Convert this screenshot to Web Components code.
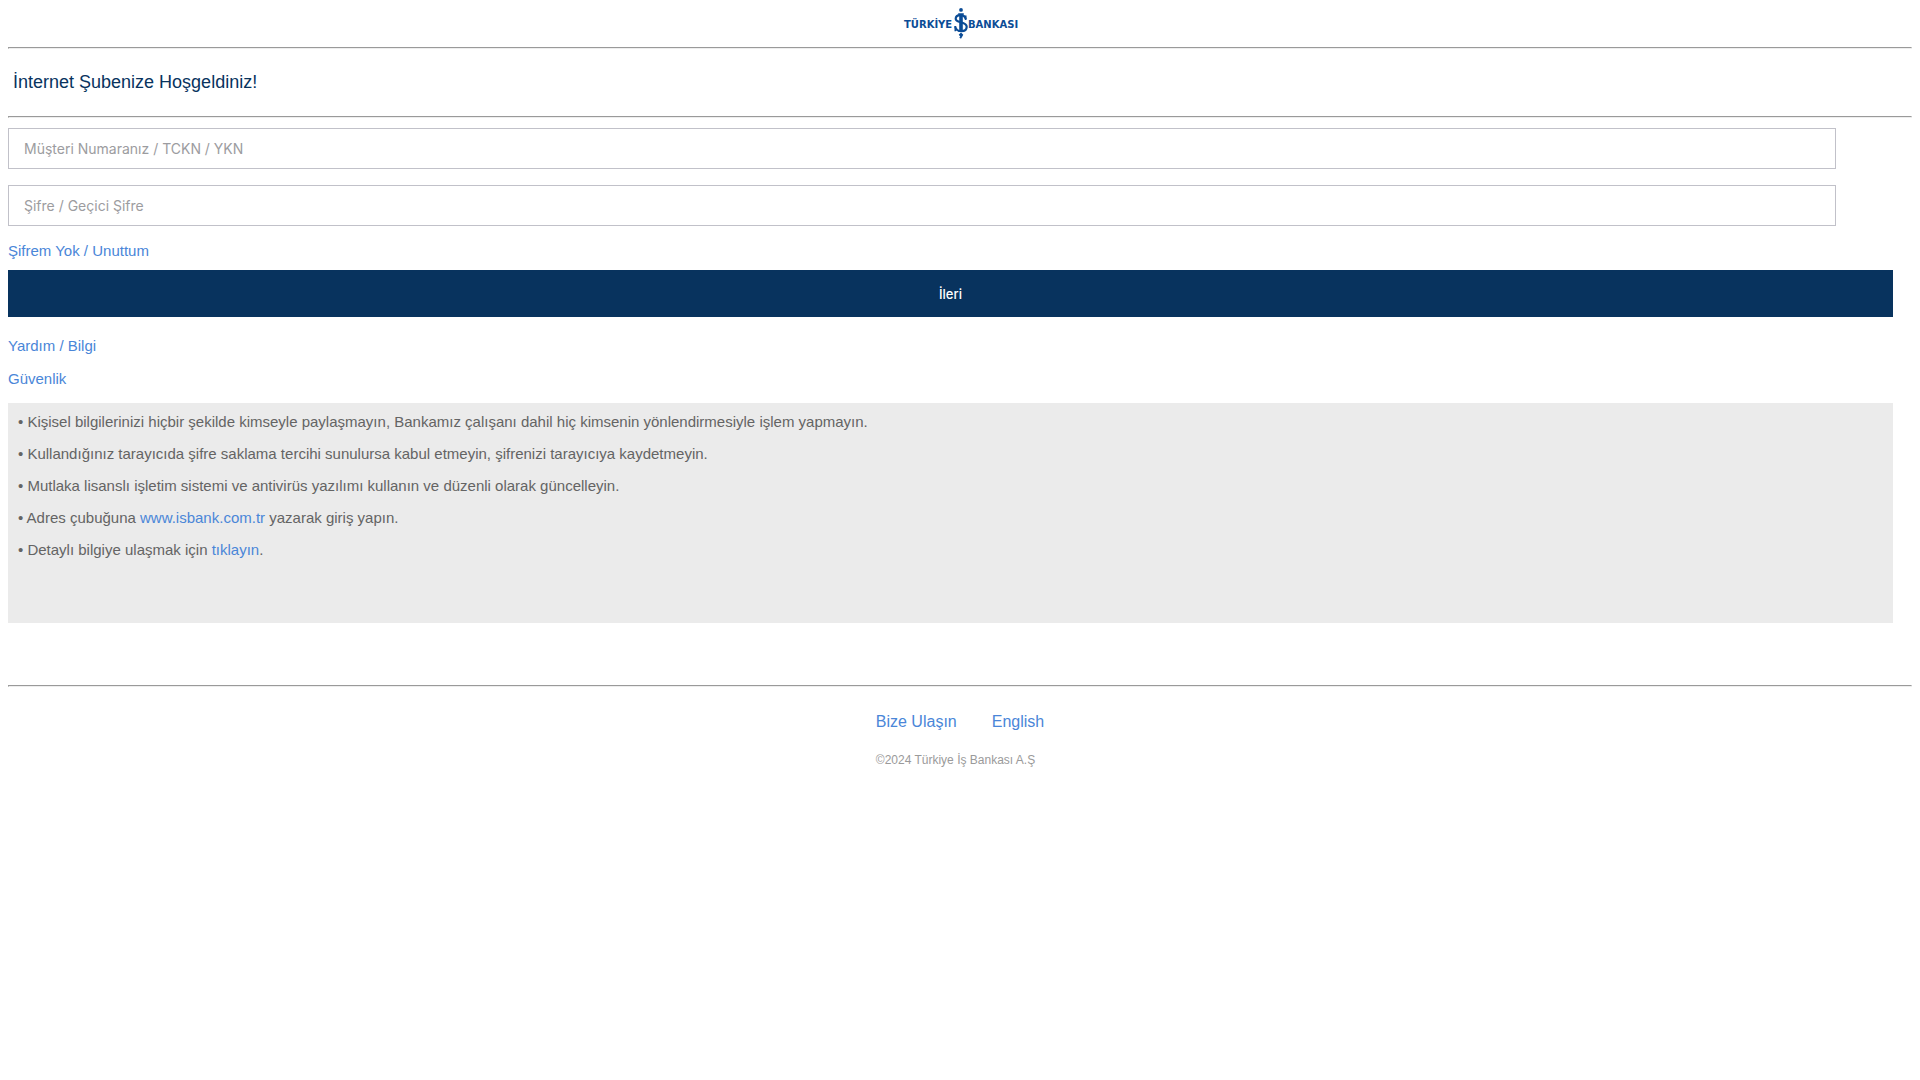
<!DOCTYPE html>
<html lang="tr">
<head>
<meta charset="utf-8">
<meta name="viewport" content="width=device-width, initial-scale=1">
<title>Türkiye İş Bankası</title>
<style>
    body {
        margin: 8px;
        background: #fff;
        color: #646464;
        font: 15px/17px "Liberation Sans", Arial, sans-serif;
    }
</style>
</head>
<body>
<login-page></login-page>

<script>
class BankLogo extends HTMLElement {
    constructor() {
        super();
        this.attachShadow({ mode: "open" });
        this.shadowRoot.innerHTML = `
            <style>
                :host { display: block; }
                svg { display: block; margin: 0 auto; }
                text { font: bold 10px "DejaVu Sans", sans-serif; }
            </style>
            <svg width="118" height="31" viewBox="0 0 118 31" fill="#0b4c96" role="img" aria-label="Türkiye İş Bankası">
                <text x="3" y="20">TÜRKİYE</text>
                <g>
                    <circle cx="60" cy="1.9" r="1.9"/>
                    <path d="M57.2 5.2h5.6v1.5h-1v15.6h1v1.500h-5.600v-1.500h1V6.700h-1z"/>
                    <path d="M64.700 11.200C64.200 8.400 62 7.200 59.300 7.200C56.400 7.200 54.700 8.700 54.700 10.800C54.700 15.600 65.700 12.900 65.700 18.800C65.700 21.600 63.300 23.200 60.200 23.200C57 23.200 54.800 21.700 54.200 18.400" fill="none" stroke="#0b4c96" stroke-width="2.200"/>
                    <path d="M64 7.500h1.500v4.500h-1.500zM53.500 18h1.500v5.200h-1.500z"/>
                    <path d="M60 24.500l2.300 2.300-2.300 4-1.700-1.200 1-1.200-1.600-1.600z"/>
                </g>
                <text x="67" y="20">BANKASI</text>
            </svg>
        `;
    }
}

class RuleLine extends HTMLElement {
    constructor() {
        super();
        this.attachShadow({ mode: "open" });
        this.shadowRoot.innerHTML = `
            <style>
                :host { display: block; }
                hr { margin: 0; color: gray; border: 1px inset; }
            </style>
            <hr>
        `;
    }
}

class TextLink extends HTMLElement {
    constructor() {
        super();
        this.attachShadow({ mode: "open" });
        const href = this.getAttribute("href") || "#";
        // no whitespace after the link, it would show before punctuation
        this.shadowRoot.innerHTML = `
            <style>
                :host { display: inline; }
                a { color: #4a86d8; text-decoration: none; }
            </style><a href="${href}"><slot></slot></a>`;
    }
}

class LoginField extends HTMLElement {
    constructor() {
        super();
        this.attachShadow({ mode: "open" });
        const label = this.getAttribute("label") || "";
        const type = this.getAttribute("type") || "text";
        this.shadowRoot.innerHTML = `
            <style>
                :host { display: block; width: 96%; }
                input {
                    display: block;
                    box-sizing: border-box;
                    width: 100%;
                    height: 41px;
                    margin: 0;
                    padding: 0 15px;
                    border: 1px solid #c1c1c9;
                    border-radius: 0;
                    background: #fff;
                    color: #646464;
                    font: 14px Inter, sans-serif;
                }
                input::placeholder { color: #9c9ca0; opacity: 1; }
            </style>
            <input type="${type}" placeholder="${label}" aria-label="${label}">
        `;
    }
}

class SubmitButton extends HTMLElement {
    constructor() {
        super();
        this.attachShadow({ mode: "open" });
        this.shadowRoot.innerHTML = `
            <style>
                :host { display: block; width: 99%; }
                button {
                    display: block;
                    width: 100%;
                    height: 47px;
                    padding: 0;
                    border: 0;
                    background: #08335e;
                    color: #fff;
                    font: 500 13px Inter, sans-serif;
                    cursor: pointer;
                }
            </style>
            <button type="button"><slot></slot></button>
        `;
    }
}

class SecurityNotes extends HTMLElement {
    constructor() {
        super();
        this.attachShadow({ mode: "open" });
        this.shadowRoot.innerHTML = `
            <style>
                :host {
                    display: flex;
                    flex-direction: column;
                    gap: 15px;
                    box-sizing: border-box;
                    width: 99%;
                    padding: 10px 10px 65px;
                    background: #ebebeb;
                }
                ::slotted(p) { margin: 0; }
            </style>
            <slot></slot>
        `;
    }
}

class PageFooter extends HTMLElement {
    constructor() {
        super();
        this.attachShadow({ mode: "open" });
        this.shadowRoot.innerHTML = `
            <style>
                :host { display: flex; justify-content: center; padding-top: 26px; }
                nav { display: flex; gap: 35px; font-size: 16px; line-height: 18px; }
                p { margin: 22px 0 0; color: #9a9a9a; font-size: 12px; line-height: 14px; }
            </style>
            <div>
                <nav>
                    <text-link>Bize Ulaşın</text-link>
                    <text-link>English</text-link>
                </nav>
                <p><slot></slot></p>
            </div>
        `;
    }
}

class LoginPage extends HTMLElement {
    constructor() {
        super();
        this.attachShadow({ mode: "open" });
        this.shadowRoot.innerHTML = `
            <style>
                :host { display: block; }
                bank-logo { padding-bottom: 8px; }
                h1 {
                    margin: 0;
                    padding: 23px 5px;
                    color: #08335e;
                    font-size: 18px;
                    font-weight: normal;
                    line-height: 21px;
                }
                form { display: flex; flex-direction: column; padding-top: 10px; }
                login-field { margin-bottom: 16px; }
                submit-button { margin: 11px 0 20px; }
                .help { display: flex; flex-direction: column; gap: 16px; margin-bottom: 16px; }
                security-notes { margin-bottom: 62px; }
            </style>
            <header><bank-logo></bank-logo></header>
            <rule-line></rule-line>
            <h1>İnternet Şubenize Hoşgeldiniz!</h1>
            <rule-line></rule-line>
            <main>
                <form>
                    <login-field label="Müşteri Numaranız / TCKN / YKN"></login-field>
                    <login-field label="Şifre / Geçici Şifre" type="password"></login-field>
                    <div><text-link>Şifrem Yok / Unuttum</text-link></div>
                    <submit-button>İleri</submit-button>
                </form>
                <div class="help">
                    <div><text-link>Yardım / Bilgi</text-link></div>
                    <div><text-link>Güvenlik</text-link></div>
                </div>
                <security-notes>
                    <p>• Kişisel bilgilerinizi hiçbir şekilde kimseyle paylaşmayın, Bankamız çalışanı dahil hiç kimsenin yönlendirmesiyle işlem yapmayın.</p>
                    <p>• Kullandığınız tarayıcıda şifre saklama tercihi sunulursa kabul etmeyin, şifrenizi tarayıcıya kaydetmeyin.</p>
                    <p>• Mutlaka lisanslı işletim sistemi ve antivirüs yazılımı kullanın ve düzenli olarak güncelleyin.</p>
                    <p>• Adres çubuğuna <text-link>www.isbank.com.tr</text-link> yazarak giriş yapın.</p>
                    <p>• Detaylı bilgiye ulaşmak için <text-link>tıklayın</text-link>.</p>
                </security-notes>
            </main>
            <rule-line></rule-line>
            <page-footer>©2024 Türkiye İş Bankası A.Ş</page-footer>
        `;
    }
}

customElements.define("bank-logo", BankLogo);
customElements.define("rule-line", RuleLine);
customElements.define("text-link", TextLink);
customElements.define("login-field", LoginField);
customElements.define("submit-button", SubmitButton);
customElements.define("security-notes", SecurityNotes);
customElements.define("page-footer", PageFooter);
customElements.define("login-page", LoginPage);
</script>
</body>
</html>
